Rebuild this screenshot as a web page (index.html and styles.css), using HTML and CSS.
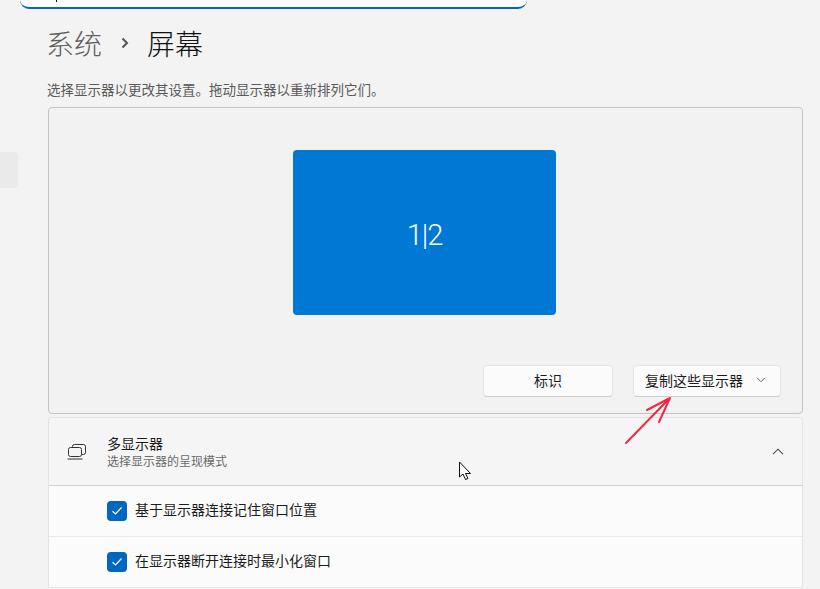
FILE: index.html
```html
<!DOCTYPE html>
<html lang="zh-CN">
<head>
<meta charset="utf-8">
<title>屏幕</title>
<link rel="stylesheet" href="styles.css">
</head>
<body>
<div class="search"><span class="caret"></span></div>
<div class="nav-item"></div>
<main class="main">
  <h1 class="crumbs">
    <span class="crumb-parent">系统</span>
    <svg class="crumb-sep" width="10" height="14" viewBox="0 0 10 14"><path d="M2.500 2.500 7 7l-4.500 4.500" fill="none" stroke="#555" stroke-width="2"/></svg>
    <span class="crumb-current">屏幕</span>
  </h1>
  <p class="hint">选择显示器以更改其设置。拖动显示器以重新排列它们。</p>
  <section class="arrange">
    <div class="stage"><div class="monitor">1|2</div></div>
    <div class="actions">
      <button class="btn btn-identify">标识</button>
      <button class="btn btn-mode">复制这些显示器
        <svg width="10" height="6" viewBox="0 0 10 6"><path d="M1 .8 5 4.800 9 .8" fill="none" stroke="#777" stroke-width="1"/></svg>
      </button>
    </div>
  </section>
  <section class="card">
    <header class="card-head">
      <svg class="card-icon" width="20" height="16" viewBox="0 0 20 16"><g fill="none" stroke="#333" stroke-width="1"><path d="M5.500 3.500V2.500a2 2 0 0 1 2-2h9a2 2 0 0 1 2 2v6a2 2 0 0 1-2 2h-1.500"/><rect x="1.500" y="3.500" width="13" height="9" rx="2"/><path d="M.5 15h15"/></g></svg>
      <div class="card-titles">
        <div class="card-title">多显示器</div>
        <div class="card-sub">选择显示器的呈现模式</div>
      </div>
      <svg class="card-chevron" width="12" height="7" viewBox="0 0 12 7"><path d="M1 6.200 6 1.200l5 5" fill="none" stroke="#444" stroke-width="1.100"/></svg>
    </header>
    <div class="row">
      <span class="check"><svg width="12" height="10" viewBox="0 0 12 10"><path d="M1.500 5.200 4.500 8l6-6.500" fill="none" stroke="#fff" stroke-width="1.200"/></svg></span>
      <span class="row-text">基于显示器连接记住窗口位置</span>
    </div>
    <div class="row">
      <span class="check"><svg width="12" height="10" viewBox="0 0 12 10"><path d="M1.500 5.200 4.500 8l6-6.500" fill="none" stroke="#fff" stroke-width="1.200"/></svg></span>
      <span class="row-text">在显示器断开连接时最小化窗口</span>
    </div>
  </section>
</main>
<svg class="arrow" width="50" height="50" viewBox="0 0 50 50"><path d="M2 47 43 5M23 14 46 2 35 26" fill="none" stroke="#f0293e" stroke-width="2" stroke-linecap="round" stroke-linejoin="round"/></svg>
<svg class="cursor" width="14" height="20" viewBox="0 0 14 20"><path d="M1.500 1v15l3.500-3 2.500 5.500 2.500-1-2.500-5H12.500z" fill="#fff" stroke="#111" stroke-width="1"/></svg>
</body>
</html>
```
FILE: styles.css
```css
* { box-sizing: border-box; }
html, body { margin: 0; height: 589px; overflow: hidden; }
body {
  background: #f3f3f3;
  color: #1b1b1b;
  font-family: "Noto Sans CJK SC", "Liberation Sans", sans-serif;
  position: relative;
}
.search {
  width: 507px;
  height: 9px;
  margin-left: 20px;
  background: #fff;
  border-bottom: 2px solid #0067c0;
  border-radius: 0 0 10px 10px;
  position: relative;
}
.caret { position: absolute; left: 36px; top: 0; width: 1px; height: 2px; background: #111; }
.nav-item {
  position: absolute; left: 0; top: 152px;
  width: 18px; height: 36px;
  background: #eaeaea;
  border-radius: 0 4px 4px 0;
}
.main { width: 755px; margin-left: 48px; }
.crumbs {
  display: flex; align-items: center;
  margin: 15px 0 0 -2px; height: 38px;
  font-size: 28px; font-weight: 400; line-height: 38px;
}
.crumb-parent { color: #5f5f5f; font-weight: 300; }
.crumb-sep { margin: 0 17px 0 18px; }
.crumb-current { color: #111; font-weight: 300; }
.hint {
  margin: 18px 0 0 -1px; height: 18px;
  font-size: 13.500px; line-height: 18px; color: #5a5a5a;
}
.arrange {
  height: 307px; margin-top: 9px;
  background: #f2f2f2;
  border: 1px solid #c4c4c4;
  border-radius: 4px;
  display: flex; flex-direction: column;
}
.stage { display: flex; justify-content: center; padding: 42px 2px 0 0; height: 257px; }
.monitor {
  width: 263px; height: 165px;
  background: #0078d4;
  border-radius: 4px;
  color: #fff;
  font-family: Roboto, sans-serif; font-weight: 300; font-size: 29px; letter-spacing: -1px;
  display: flex; align-items: center; justify-content: center;
  padding-top: 4px;
}
.actions { display: flex; justify-content: flex-end; gap: 20px; padding-right: 21px; }
.btn {
  height: 32px;
  background: #fbfbfb;
  border: 1px solid #e5e5e5;
  border-bottom-color: #cfcfcf;
  border-radius: 4px;
  font: inherit; font-size: 14px; line-height: 28px; color: #1b1b1b;
  display: flex; align-items: center; justify-content: center;
  padding: 0 0 2px;
}
.btn-identify { width: 130px; }
.btn-mode { width: 148px; gap: 13px; padding-left: 0; justify-content: flex-end; padding-right: 14px; }
.card {
  margin-top: 3px;
  border: 1px solid #e3e3e3;
  border-bottom: 0;
  border-radius: 4px 4px 0 0;
  background: #fbfbfb;
}
.card-head {
  height: 68px;
  background: #f5f5f5;
  border-bottom: 1px solid #d2d2d2;
  border-radius: 4px 4px 0 0;
  display: flex; align-items: center;
  padding: 0 18px 0 18px;
}
.card-icon { flex: none; margin-right: 1px; }
.card-titles { margin-left: 19px; flex: 1; }
.card-title { font-size: 14px; line-height: 18px; color: #1b1b1b; }
.card-sub { font-size: 12px; line-height: 17px; color: #6a6a6a; }
.row {
  height: 51px;
  border-bottom: 1px solid #e8e8e8;
  display: flex; align-items: center; gap: 8px;
  padding-left: 58px;
  font-size: 14px;
}
.row-text { line-height: 20px; padding-bottom: 5px; }
.check {
  width: 20px; height: 20px;
  background: #0067c0;
  border-radius: 4px;
  display: flex; align-items: center; justify-content: center;
}
.arrow { position: absolute; left: 624px; top: 396px; }
.cursor { position: absolute; left: 458px; top: 461px; }
```
